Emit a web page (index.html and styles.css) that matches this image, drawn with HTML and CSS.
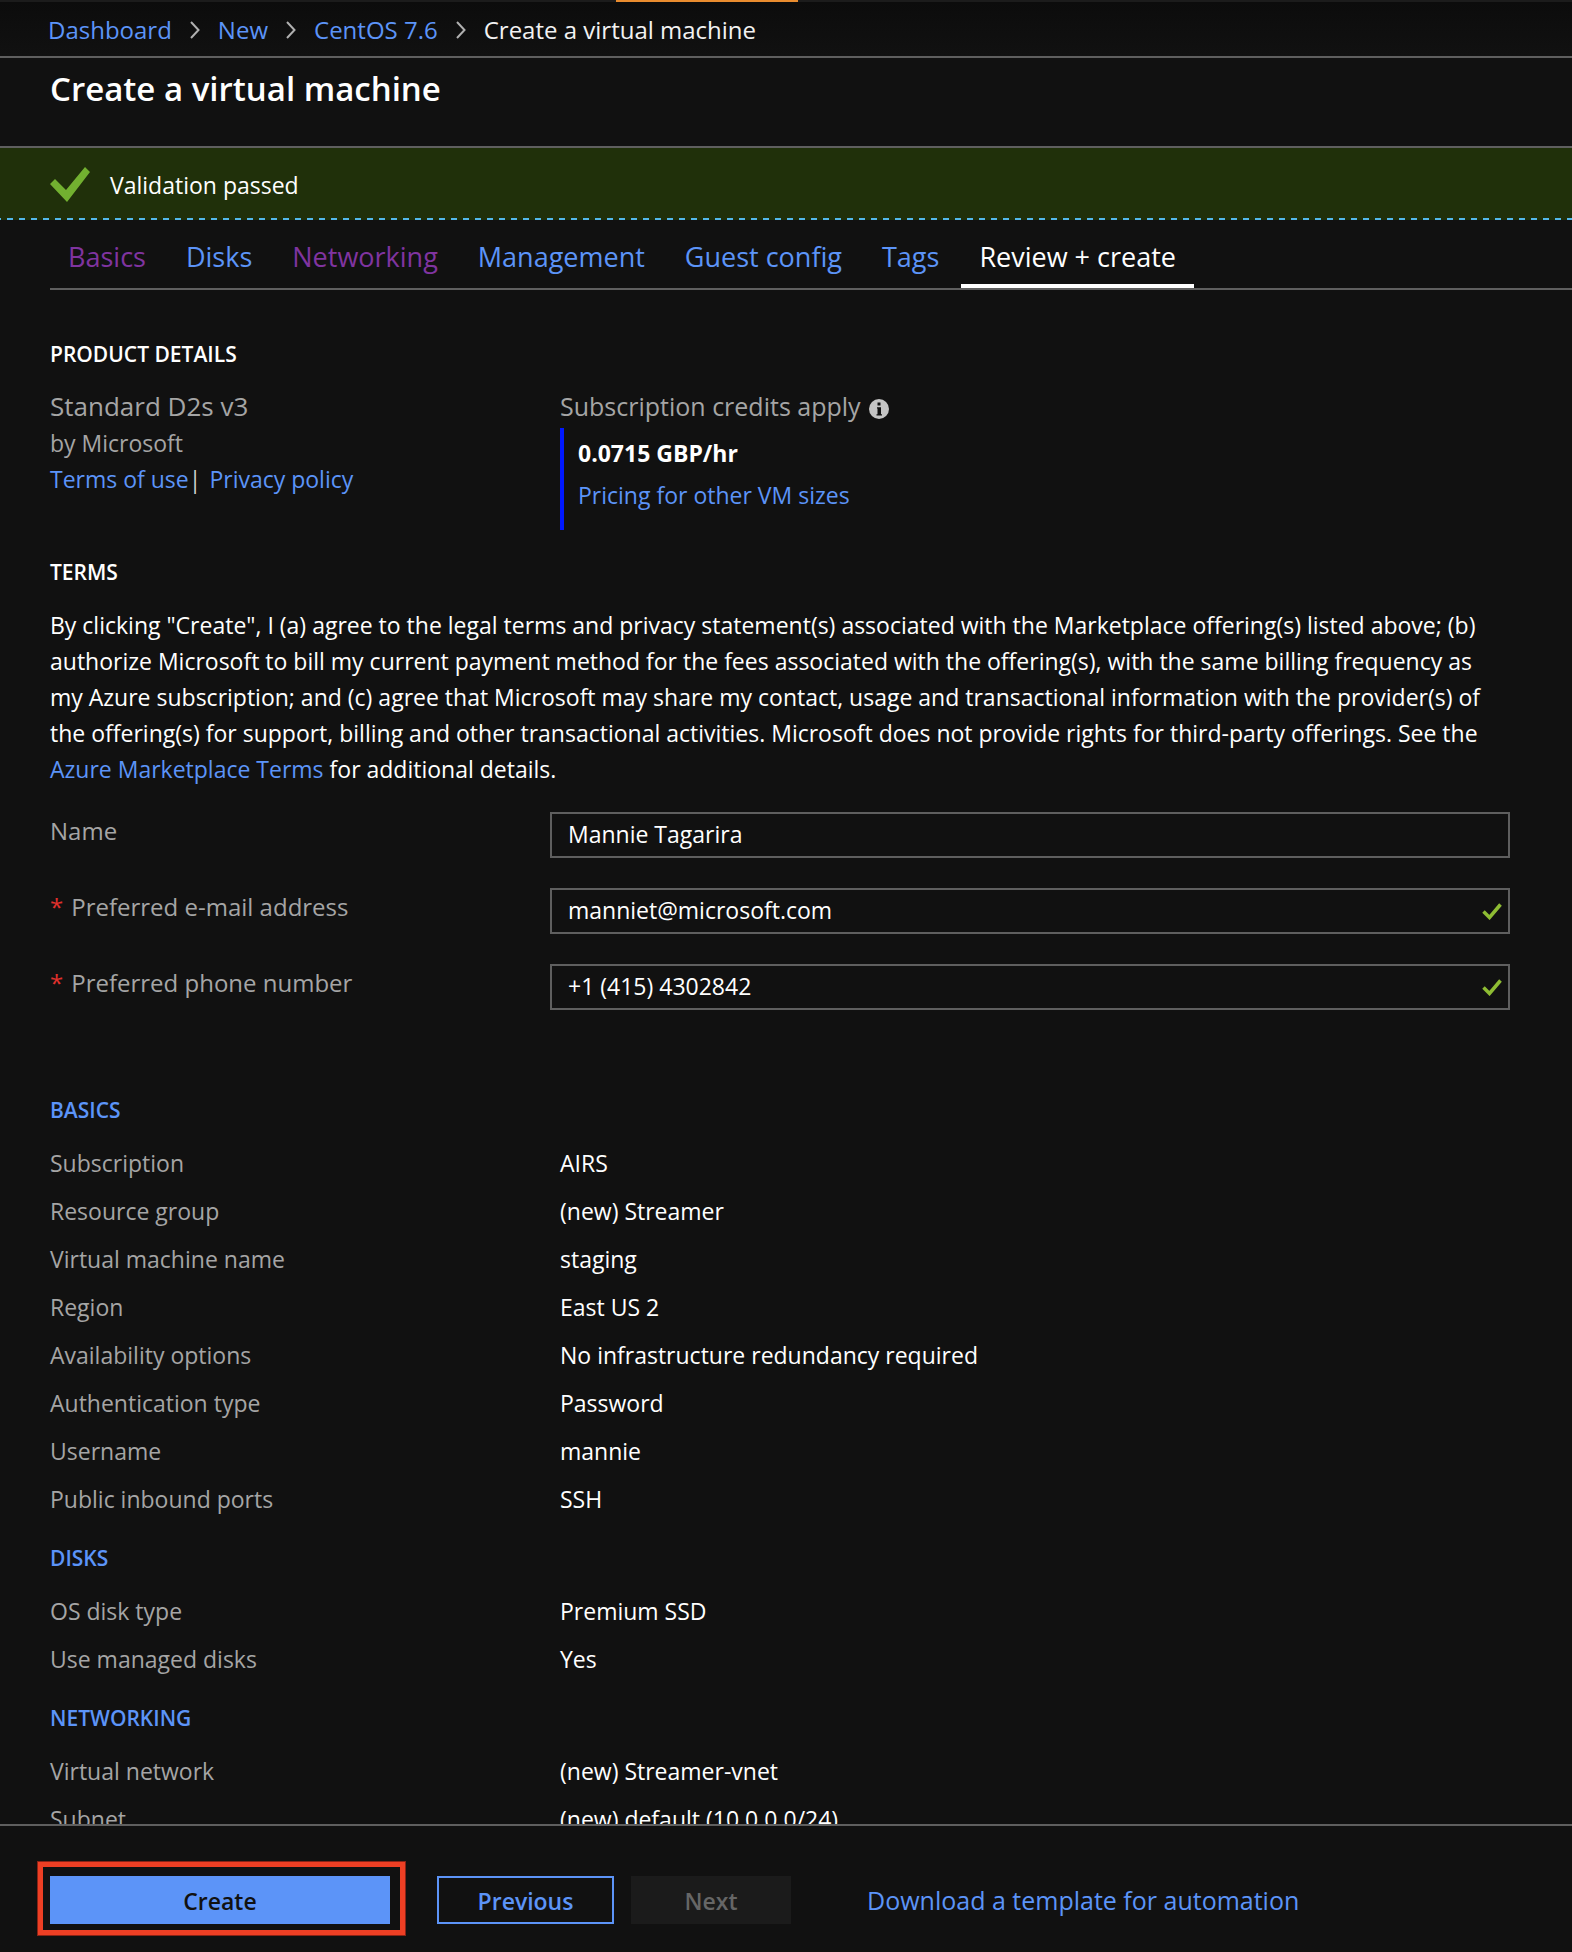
FILE: index.html
```html
<!DOCTYPE html>
<html lang="en">
<head>
<meta charset="utf-8">
<title>Create a virtual machine</title>
<link rel="stylesheet" href="styles.css">
</head>
<body>
<div class="app">
  <div class="topbar"><span class="topbar-accent"></span></div>
  <nav class="breadcrumb" aria-label="Breadcrumb">
    <a href="#">Dashboard</a>
    <svg class="chevron" viewBox="0 0 10 18" aria-hidden="true"><path d="M1 1l7.500 8L1 17"/></svg>
    <a href="#">New</a>
    <svg class="chevron" viewBox="0 0 10 18" aria-hidden="true"><path d="M1 1l7.500 8L1 17"/></svg>
    <a href="#">CentOS 7.6</a>
    <svg class="chevron" viewBox="0 0 10 18" aria-hidden="true"><path d="M1 1l7.500 8L1 17"/></svg>
    <span>Create a virtual machine</span>
  </nav>
  <header class="blade-header"><h1>Create a virtual machine</h1></header>
  <div class="status" role="status">
    <svg class="status-icon" viewBox="0 0 40 36" aria-hidden="true"><path d="M0 17L5 12 16 23 35 0 40 5 17 35z"/></svg>
    <span>Validation passed</span>
  </div>
  <nav class="tabs" aria-label="Steps">
    <a class="tab visited" href="#">Basics</a>
    <a class="tab" href="#">Disks</a>
    <a class="tab visited" href="#">Networking</a>
    <a class="tab" href="#">Management</a>
    <a class="tab" href="#">Guest config</a>
    <a class="tab" href="#">Tags</a>
    <a class="tab active" href="#" aria-current="page">Review + create</a>
  </nav>

  <main class="content">
    <section class="product">
      <h2>PRODUCT DETAILS</h2>
      <div class="columns">
        <div class="offer">
          <p class="offer-name">Standard D2s v3</p>
          <p>by Microsoft</p>
          <p class="offer-links"><a href="#">Terms of use</a><span class="divider">|</span><a href="#">Privacy policy</a></p>
        </div>
        <div class="pricing">
          <p class="credits">Subscription credits apply
            <svg class="info" viewBox="0 0 20 20" aria-hidden="true"><circle cx="10" cy="10" r="10"/><path d="M8.500 3.500h3v3h-3zM8 8.200h4v7h1v1.300H7.500v-1.300h1v-5.700H8z"/></svg>
          </p>
          <div class="price-box">
            <strong>0.0715 GBP/hr</strong>
            <a href="#">Pricing for other VM sizes</a>
          </div>
        </div>
      </div>
    </section>

    <section class="terms">
      <h2>TERMS</h2>
      <p>By clicking "Create", I (a) agree to the legal terms and privacy statement(s) associated with the Marketplace offering(s) listed above; (b) authorize Microsoft to bill my current payment method for the fees associated with the offering(s), with the same billing frequency as my Azure subscription; and (c) agree that Microsoft may share my contact, usage and transactional information with the provider(s) of the offering(s) for support, billing and other transactional activities. Microsoft does not provide rights for third-party offerings. See the <a href="#">Azure Marketplace Terms</a> for additional details.</p>
    </section>

    <form class="contact" id="contact">
      <div class="field">
        <label for="name">Name</label>
        <div class="control"><input id="name" type="text" value="Mannie Tagarira"></div>
      </div>
      <div class="field">
        <label for="email"><span class="required">*</span>Preferred e-mail address</label>
        <div class="control"><input id="email" type="email" value="manniet@microsoft.com">
          <svg class="valid" viewBox="0 0 20 17" aria-hidden="true"><path d="M1.500 8.500l6 6L18.500 1.500"/></svg></div>
      </div>
      <div class="field">
        <label for="phone"><span class="required">*</span>Preferred phone number</label>
        <div class="control"><input id="phone" type="tel" value="+1 (415) 4302842">
          <svg class="valid" viewBox="0 0 20 17" aria-hidden="true"><path d="M1.500 8.500l6 6L18.500 1.500"/></svg></div>
      </div>
    </form>

    <section class="summary">
      <h2>BASICS</h2>
      <dl>
        <dt>Subscription</dt><dd>AIRS</dd>
        <dt>Resource group</dt><dd>(new) Streamer</dd>
        <dt>Virtual machine name</dt><dd>staging</dd>
        <dt>Region</dt><dd>East US 2</dd>
        <dt>Availability options</dt><dd>No infrastructure redundancy required</dd>
        <dt>Authentication type</dt><dd>Password</dd>
        <dt>Username</dt><dd>mannie</dd>
        <dt>Public inbound ports</dt><dd>SSH</dd>
      </dl>
      <h2>DISKS</h2>
      <dl>
        <dt>OS disk type</dt><dd>Premium SSD</dd>
        <dt>Use managed disks</dt><dd>Yes</dd>
      </dl>
      <h2>NETWORKING</h2>
      <dl>
        <dt>Virtual network</dt><dd>(new) Streamer-vnet</dd>
        <dt>Subnet</dt><dd>(new) default (10.0.0.0/24)</dd>
      </dl>
    </section>
  </main>

  <footer class="actions">
    <div class="highlight"><button class="btn primary" type="submit" form="contact">Create</button></div>
    <button class="btn secondary" type="button">Previous</button>
    <button class="btn next" type="button" disabled>Next</button>
    <a class="template-link" href="#">Download a template for automation</a>
  </footer>
</div>
</body>
</html>
```
FILE: styles.css
```css
* { box-sizing: border-box; }

:root {
  --bg: #111111;
  --line: #5f5f5f;
  --text: #ffffff;
  --muted: #a5a5a5;
  --link: #5c94f8;
}

body {
  margin: 0;
  background: var(--bg);
  color: var(--text);
  font-family: "Open Sans", "Noto Sans", sans-serif;
  font-size: 23px;
  line-height: 36px;
}

h1, h2, p, dl, dd { margin: 0; }

a { color: var(--link); text-decoration: none; }

.app {
  display: flex;
  flex-direction: column;
  height: 100vh;
}

.app > * { flex-shrink: 0; }

.topbar {
  display: flex;
  justify-content: center;
  height: 2px;
  padding-right: 158px;
  background: #1c1c1c;
}

.topbar-accent { width: 182px; background: #e98c2f; }

.breadcrumb {
  display: flex;
  align-items: center;
  gap: 18px;
  height: 56px;
  padding: 2px 48px 0;
  border-bottom: 2px solid var(--line);
  background: linear-gradient(#0c0c0c, var(--bg));
  font-size: 24px;
}

.breadcrumb span { color: #f2f2f2; }

.chevron {
  width: 10px;
  height: 18px;
  fill: none;
  stroke: #b0b0b0;
  stroke-width: 2;
}

.blade-header {
  height: 90px;
  padding: 11px 50px;
  border-bottom: 2px solid var(--line);
}

h1 { font-size: 33px; font-weight: 600; line-height: 40px; }

.status {
  display: flex;
  align-items: center;
  gap: 20px;
  height: 72px;
  padding: 2px 50px 0;
  background:
    repeating-linear-gradient(90deg, #53b9ec 0 6px, transparent 6px 12px) -5px 100% / calc(100% + 5px) 2px no-repeat,
    #20300a;
}

.status-icon { width: 40px; height: 36px; fill: #72b030; }

.tabs {
  display: flex;
  gap: 4px;
  height: 70px;
  margin-left: 50px;
  border-bottom: 2px solid var(--line);
  font-size: 27px;
}

.tab {
  padding: 19px 18px 0;
  border-bottom: 4px solid transparent;
}

.tab.visited { color: #8034a0; }
.tab.active { color: var(--text); border-bottom-color: var(--text); }

.content {
  flex: 1 1 0;
  min-height: 0;
  padding: 46px 62px 0 50px;
  overflow-y: auto;
  scrollbar-width: none;
}

h2 { font-size: 21px; font-weight: 600; line-height: 36px; }

.columns {
  display: grid;
  grid-template-columns: 510px 1fr;
  margin-top: 15px;
}

.offer { color: var(--muted); }
.offer-name { font-size: 26px; line-height: 38px; }
.divider { margin-right: 8px; color: #d0d0d0; }

.credits {
  display: flex;
  align-items: center;
  gap: 8px;
  height: 41px;
  padding-bottom: 3px;
  color: var(--muted);
  font-size: 25px;
}

.info { width: 20px; height: 20px; margin-top: 6px; fill: #c4c4c4; }
.info path { fill: var(--bg); }

.price-box {
  display: flex;
  flex-direction: column;
  gap: 6px;
  height: 102px;
  padding: 7px 14px;
  border-left: 4px solid #0018ff;
}

.terms { margin-top: 24px; }
.terms p { margin-top: 17px; padding-right: 20px; }

.contact {
  display: flex;
  flex-direction: column;
  gap: 30px;
  margin-top: 25px;
}

.field {
  display: grid;
  grid-template-columns: 500px 1fr;
}

.field label { color: var(--muted); font-size: 24px; line-height: 38px; }
.required { margin-right: 8px; color: #e0302c; }

.control { position: relative; }

.control input {
  display: block;
  width: 100%;
  height: 46px;
  padding: 0 48px 2px 16px;
  border: 2px solid var(--line);
  border-radius: 0;
  background: transparent;
  color: var(--text);
  font: inherit;
}

.valid {
  position: absolute;
  right: 8px;
  top: 15px;
  width: 20px;
  height: 17px;
  fill: none;
  stroke: #8ebc33;
  stroke-width: 3.500;
}

.summary { margin-top: 82px; }
.summary h2 { margin-bottom: 11px; color: var(--link); }

dl {
  display: grid;
  grid-template-columns: 510px 1fr;
  margin-bottom: 17px;
  line-height: 48px;
}

dt { color: var(--muted); }

.actions {
  display: flex;
  align-items: center;
  height: 128px;
  padding: 22px 50px 0;
  border-top: 2px solid var(--line);
}

.highlight { position: relative; display: flex; }

.highlight::after {
  content: "";
  position: absolute;
  inset: -15px -16px -12px -13px;
  border: 6px solid #ee3f24;
  outline: 1px solid #8a2316;
  outline-offset: -1px;
  pointer-events: none;
}

.btn {
  height: 48px;
  padding: 2px 6px 0;
  border: 0;
  font: inherit;
  font-weight: 600;
}

.primary { width: 340px; background: var(--link); color: var(--bg); }
.secondary { width: 177px; margin-left: 47px; border: 2px solid var(--link); background: transparent; color: var(--link); }
.next { width: 160px; margin-left: 17px; background: #1b1b1b; color: #666666; }

.template-link { margin-left: 76px; font-size: 25px; }
```
